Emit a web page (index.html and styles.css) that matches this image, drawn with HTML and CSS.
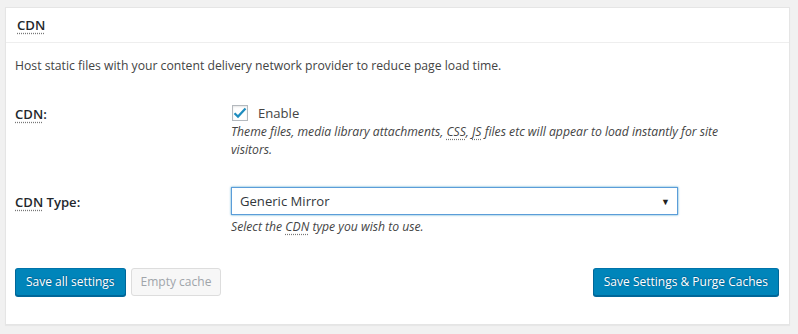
FILE: index.html
```html
<!DOCTYPE html>
<html lang="en">

<head>
    <meta charset="UTF-8" />
    <title>CDN</title>
    <link rel="stylesheet" href="styles.css">
</head>

<body>
    <div class="postbox">
        <h2 class="hndle"><abbr title="Content Delivery Network">CDN</abbr></h2>
        <div class="inside">
            <p class="intro">Host static files with your content delivery network provider to reduce page load time.</p>
            <div class="form-table">
                <div class="row row-enable">
                    <div class="label"><abbr title="Content Delivery Network">CDN</abbr>:</div>
                    <div class="field">
                        <label class="check">
                            <span class="checkbox">
                                <svg width="14" height="12" viewBox="0 0 14 12">
                                    <path d="M1.5 6.2 L5 9.6 L12.5 1.5" fill="none" stroke="#1e8cbe" stroke-width="2.2" />
                                </svg>
                            </span>
                            Enable
                        </label>
                        <p class="description">Theme files, media library attachments, <abbr>CSS</abbr>, <abbr>JS</abbr> files etc will appear to load instantly for site visitors.</p>
                    </div>
                </div>
                <div class="row row-type">
                    <div class="label"><abbr title="Content Delivery Network">CDN</abbr> Type:</div>
                    <div class="field">
                        <div class="select">
                            <span>Generic Mirror</span>
                            <span class="arrow">&#9660;</span>
                        </div>
                        <p class="description">Select the <abbr>CDN</abbr> type you wish to use.</p>
                    </div>
                </div>
            </div>
            <div class="actions">
                <div class="left">
                    <button class="button primary">Save all settings</button>
                    <button class="button disabled">Empty cache</button>
                </div>
                <button class="button primary">Save Settings &amp; Purge Caches</button>
            </div>
        </div>
    </div>
</body>

</html>
```

FILE: styles.css
```css
* {
    box-sizing: border-box;
    margin: 0;
    padding: 0;
}

body {
    font-family: 'Open Sans', 'Noto Sans', sans-serif;
    font-size: 12.2px;
    color: #444;
    background: #f1f1f1;
    padding: 7px 8px 0 5px;
    height: 334px;
    overflow: hidden;
}

abbr {
    text-decoration: underline dotted #777;
    text-underline-offset: 3px;
}

.postbox {
    width: 785px;
    height: 318px;
    background: #fff;
    border: 1px solid #e5e5e5;
    box-shadow: 0 1px 1px rgba(0, 0, 0, 0.04);
}

.hndle {
    height: 35px;
    padding: 8px 11px 0;
    font-size: 13.2px;
    font-weight: 600;
    color: #23282d;
    line-height: 19px;
    border-bottom: 1px solid #eee;
}

.inside {
    padding: 13px 9px 0;
}

.intro {
    line-height: 20px;
}

.form-table {
    margin-top: 25px;
}

.row {
    display: flex;
}

.label {
    width: 216px;
    flex-shrink: 0;
    font-size: 13.1px;
    font-weight: 600;
    color: #23282d;
    line-height: 20px;
}

.row-enable .label {
    padding-top: 3px;
}

.row-type {
    margin-top: 28px;
}

.row-type .label {
    padding-top: 5px;
}

.check {
    display: flex;
    align-items: center;
    gap: 10px;
    font-size: 13.1px;
    color: #444;
    line-height: 20px;
    padding-top: 2px;
    padding-left: 1px;
}

.checkbox {
    width: 16px;
    height: 16px;
    border: 1px solid #b4b9be;
    background: #fff;
    box-shadow: inset 0 1px 2px rgba(0, 0, 0, 0.1);
    display: flex;
    align-items: center;
    justify-content: center;
}

.description {
    font-style: italic;
    font-size: 12.2px;
    line-height: 18px;
    color: #444;
    width: 520px;
}

.select {
    width: 447px;
    height: 28px;
    border: 1px solid #5b9dd9;
    box-shadow: 0 0 2px rgba(30, 140, 190, 0.8);
    display: flex;
    align-items: center;
    justify-content: space-between;
    padding: 0 7px 0 8px;
    font-size: 13.1px;
    color: #32373c;
    margin-bottom: 3px;
}

.arrow {
    font-size: 9px;
    color: #222;
}

.actions {
    display: flex;
    justify-content: space-between;
    align-items: center;
    margin-top: 32px;
    padding-right: 1px;
}

.left {
    display: flex;
    gap: 5px;
}

.button {
    font-family: inherit;
    font-size: 12px;
    height: 28px;
    line-height: 26px;
    padding: 0 10px;
    border-radius: 3px;
    border: 1px solid;
    cursor: pointer;
}

.primary {
    background: #0085ba;
    border-color: #0073aa #006799 #006799;
    box-shadow: 0 1px 0 #006799;
    color: #fff;
    text-shadow: 0 -1px 1px #006799, 1px 0 1px #006799;
}

.disabled {
    background: #f7f7f7;
    border-color: #ddd;
    color: #a0a5aa;
    padding: 0 9px;
}
```
